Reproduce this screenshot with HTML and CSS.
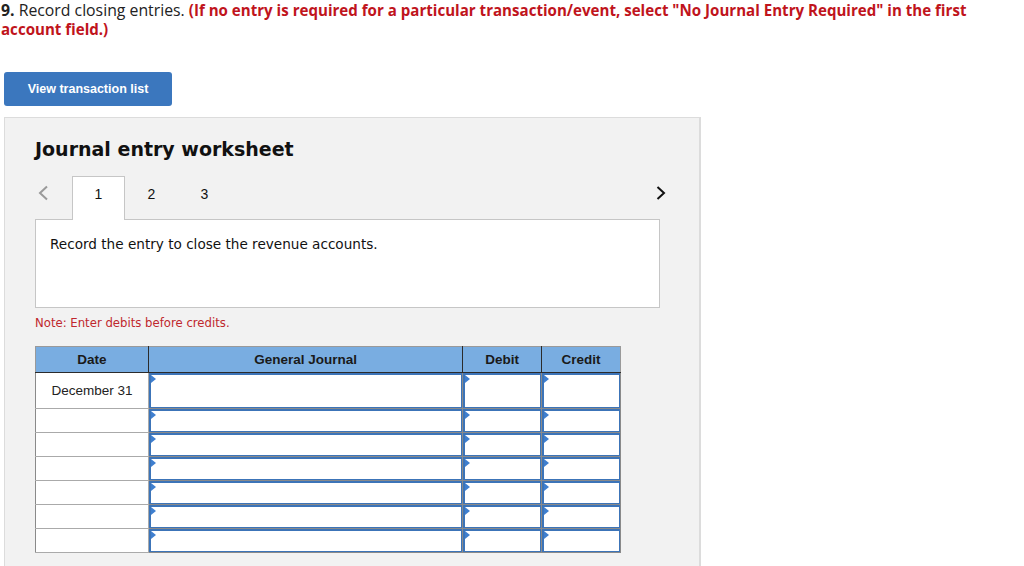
FILE: index.html
```html
<!DOCTYPE html>
<html lang="en">
<head>
    <title>Journal entry worksheet</title>
    <meta charset="UTF-8">
    <link rel="stylesheet" href="styles.css">
</head>
<body>
    <p class="question">
        <b>9.</b> Record closing entries. <span class="hint">(If no entry is required for a particular transaction/event, select "No Journal Entry Required" in the first account field.)</span>
    </p>

    <button class="btn">View transaction list</button>

    <div class="worksheet">
        <h2>Journal entry worksheet</h2>

        <div class="tabs">
            <span class="arrow prev">
                <svg width="12" height="16" viewBox="0 0 12 16"><path d="M10 1.5 L3 8 L10 14.5" fill="none" stroke="#9a9a9a" stroke-width="2"/></svg>
            </span>
            <div class="tab active">1</div>
            <div class="tab">2</div>
            <div class="tab">3</div>
            <span class="arrow next">
                <svg width="12" height="16" viewBox="0 0 12 16"><path d="M2.5 2 L9 8 L2.5 14" fill="none" stroke="#111" stroke-width="2"/></svg>
            </span>
        </div>

        <div class="prompt">Record the entry to close the revenue accounts.</div>

        <p class="note">Note: Enter debits before credits.</p>

        <table class="journal">
            <thead>
                <tr>
                    <th class="col-date">Date</th>
                    <th class="col-account">General Journal</th>
                    <th class="col-amount">Debit</th>
                    <th class="col-amount">Credit</th>
                </tr>
            </thead>
            <tbody>
                <tr class="first">
                    <td class="date">December 31</td>
                    <td class="entry"><div class="field"></div></td>
                    <td class="entry"><div class="field"></div></td>
                    <td class="entry"><div class="field"></div></td>
                </tr>
                <tr>
                    <td class="date"></td>
                    <td class="entry"><div class="field"></div></td>
                    <td class="entry"><div class="field"></div></td>
                    <td class="entry"><div class="field"></div></td>
                </tr>
                <tr>
                    <td class="date"></td>
                    <td class="entry"><div class="field"></div></td>
                    <td class="entry"><div class="field"></div></td>
                    <td class="entry"><div class="field"></div></td>
                </tr>
                <tr>
                    <td class="date"></td>
                    <td class="entry"><div class="field"></div></td>
                    <td class="entry"><div class="field"></div></td>
                    <td class="entry"><div class="field"></div></td>
                </tr>
                <tr>
                    <td class="date"></td>
                    <td class="entry"><div class="field"></div></td>
                    <td class="entry"><div class="field"></div></td>
                    <td class="entry"><div class="field"></div></td>
                </tr>
                <tr>
                    <td class="date"></td>
                    <td class="entry"><div class="field"></div></td>
                    <td class="entry"><div class="field"></div></td>
                    <td class="entry"><div class="field"></div></td>
                </tr>
                <tr>
                    <td class="date"></td>
                    <td class="entry"><div class="field"></div></td>
                    <td class="entry"><div class="field"></div></td>
                    <td class="entry"><div class="field"></div></td>
                </tr>
            </tbody>
        </table>
    </div>
</body>
</html>
```

FILE: styles.css
```css
body {
    margin: 0;
    padding: 0;
    background-color: #fff;
    font-family: "Open Sans", "Liberation Sans", sans-serif;
    color: #222;
    overflow: hidden;
}
.question {
    margin: 1px 0 0 1px;
    width: 990px;
    font-size: 15.8px;
    line-height: 19px;
    color: #222;
}
.question b {
    font-weight: 700;
}
.hint {
    color: #c0141c;
    font-size: 15.1px;
    font-weight: 700;
}
.btn {
    display: block;
    margin: 33px 0 0 4px;
    width: 168px;
    height: 34px;
    padding: 0;
    background-color: #3b77be;
    color: white;
    border: none;
    border-radius: 3px;
    font-family: "Liberation Sans", Arial, sans-serif;
    font-size: 12.5px;
    font-weight: bold;
}
.worksheet {
    margin: 11px 0 0 4px;
    width: 625px;
    height: 460px;
    padding: 0 39px 0 30px;
    background-color: #f2f2f2;
    border: 1px solid #dcdcdc;
    border-right-width: 2px;
}
.worksheet h2 {
    margin: 19px 0 0 0;
    font-family: "DejaVu Sans", Verdana, sans-serif;
    font-size: 19px;
    line-height: 24px;
    font-weight: bold;
    color: #111;
}
.tabs {
    display: flex;
    margin-top: 15px;
    height: 43px;
    font-family: "Liberation Sans", Arial, sans-serif;
    font-size: 14px;
    color: #111;
}
.arrow {
    display: flex;
    align-items: center;
    height: 33px;
}
.arrow.prev {
    width: 37px;
    padding-left: 2px;
    box-sizing: border-box;
}
.arrow.next {
    margin-left: auto;
    margin-right: -7px;
}
.tab {
    width: 53px;
    box-sizing: border-box;
    text-align: center;
    padding-top: 9px;
    border: 1px solid transparent;
    border-bottom: none;
}
.tab.active {
    background-color: white;
    border-color: #c6c6c6;
    position: relative;
    z-index: 1;
    height: 44px;
}
.prompt {
    padding: 16px 14px 0 14px;
    box-sizing: border-box;
    height: 89px;
    background-color: white;
    border: 1px solid #c6c6c6;
    font-family: "DejaVu Sans", Verdana, sans-serif;
    font-size: 13.6px;
    color: #111;
}
.note {
    margin: 8px 0 0 0;
    font-family: "DejaVu Sans", Verdana, sans-serif;
    font-size: 11.7px;
    line-height: 14px;
    color: #c0272d;
}
.journal {
    margin-top: 16px;
    border-collapse: collapse;
    width: 586px;
    font-family: "Liberation Sans", Arial, sans-serif;
    font-size: 13.5px;
    background-color: white;
}
.journal th {
    height: 25px;
    padding: 0;
    background-color: #79ade1;
    color: #1a1a1a;
    font-weight: bold;
    border: 1px solid #2b2b2b;
    border-top-color: #9a9a9a;
    border-left-color: #9a9a9a;
}
.journal th:last-child {
    border-right-color: #9a9a9a;
}
.col-date {
    width: 112px;
}
.col-account {
    width: 314px;
}
.col-amount {
    width: 78px;
}
.journal td {
    padding: 0;
    border: 1px solid #8a8a8a;
}
.journal td.date {
    text-align: center;
    border-color: #aaaaaa;
    border-left-color: #8a8a8a;
}
.journal tr.first td.date {
    border-top-color: #2b2b2b;
}
.field {
    position: relative;
    height: 23px;
    box-sizing: border-box;
    border: 1px solid #3c74b8;
    border-left-width: 2px;
    border-top-width: 2px;
}
.journal tr.first .field {
    height: 35px;
}
.field::before {
    content: "";
    position: absolute;
    top: 0;
    left: 0;
    border-left: 5px solid #3f7fcf;
    border-top: 4px solid transparent;
    border-bottom: 4px solid transparent;
}
```
